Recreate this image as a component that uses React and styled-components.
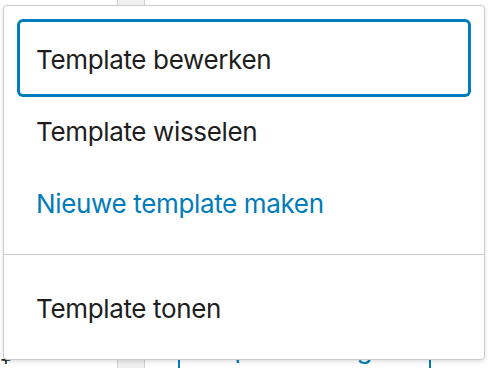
import React from "react";
import styled, { createGlobalStyle } from "styled-components";

const GlobalStyle = createGlobalStyle`
  html, body {
    margin: 0;
    padding: 0;
    background: #ffffff;
    width: 496px;
    height: 368px;
    overflow: hidden;
  }
  * { box-sizing: border-box; }
`;

const Page = styled.div`
  position: relative;
  width: 496px;
  height: 368px;
  overflow: hidden;
  font-family: Inter, "Liberation Sans", sans-serif;
`;

const Backdrop = styled.div`
  display: flex;
  height: 100%;
`;

const SideArea = styled.div`
  width: 117px;
  display: flex;
  align-items: flex-end;
  padding: 0 0 2px 0;
`;

const Plus = styled.span`
  font-family: "DejaVu Sans", sans-serif;
  font-weight: bold;
  font-size: 14px;
  line-height: 1;
  color: #1e1e1e;
`;

const Strip = styled.div`
  width: 28px;
  background: #f0f0f0;
  border-left: 1px solid #d0d0d0;
  border-right: 1px solid #d0d0d0;
`;

const MainArea = styled.div`
  flex: 1;
  display: flex;
  align-items: flex-end;
  padding-left: 33px;
`;

const DuplicateButton = styled.button`
  width: 253px;
  height: 60px;
  margin-bottom: -8px;
  border: 2px solid #007cba;
  border-radius: 4px;
  background: #ffffff;
  color: #007cba;
  font-family: Inter, "Liberation Sans", sans-serif;
  font-size: 26px;
  display: flex;
  align-items: flex-end;
  justify-content: center;
  padding: 0 0 10px;
`;

const Popover = styled.div`
  position: absolute;
  left: 3px;
  top: 5px;
  width: 482px;
  background: #ffffff;
  border: 1px solid #cccccc;
  border-radius: 4px;
  box-shadow: 0 2px 4px rgba(0, 0, 0, 0.12);
  display: flex;
  flex-direction: column;
`;

const Group = styled.div`
  display: flex;
  flex-direction: column;
  padding: 16px;
`;

const Separator = styled.div`
  height: 1px;
  background: #cccccc;
`;

const Item = styled.div`
  height: 72px;
  display: flex;
  align-items: center;
  padding: 2px 17px 0 16px;
  border-radius: 3px;
  font-size: 26px;
  letter-spacing: -0.35px;
  color: ${(p) => (p.$link ? "#007cba" : "#1e1e1e")};
  box-shadow: ${(p) => (p.$focused ? "0 0 0 3px #007cba" : "none")};
`;

export default function App() {
  return (
    <Page>
      <GlobalStyle />
      <Backdrop>
        <SideArea>
          <Plus>+</Plus>
        </SideArea>
        <Strip />
        <MainArea>
          <DuplicateButton>Dupliceer Pagina</DuplicateButton>
        </MainArea>
      </Backdrop>
      <Popover>
        <Group>
          <Item $focused>Template bewerken</Item>
          <Item>Template wisselen</Item>
          <Item $link>Nieuwe template maken</Item>
        </Group>
        <Separator />
        <Group>
          <Item>Template tonen</Item>
        </Group>
      </Popover>
    </Page>
  );
}
